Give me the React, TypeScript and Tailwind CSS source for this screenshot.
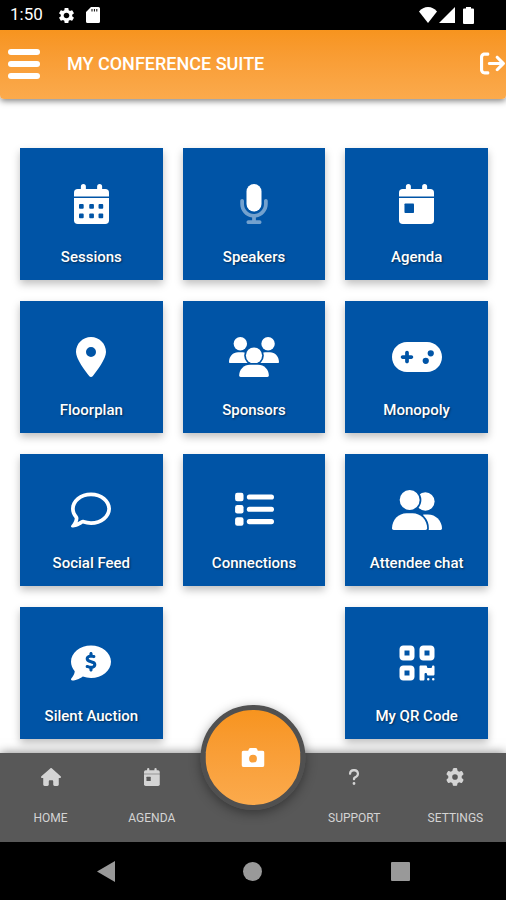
import type { ReactNode } from 'react'
import {
  FaArrowRightFromBracket,
  FaCommentDollar,
  FaGamepad,
  FaGear,
  FaHouse,
  FaLocationDot,
  FaQrcode,
  FaQuestion,
  FaRegComment,
} from 'react-icons/fa6'
import { MdSettings } from 'react-icons/md'

type IconProps = { className?: string }

function CalendarFrame({ className, children }: { className?: string; children: ReactNode }) {
  return (
    <svg viewBox="0 0 448 512" fill="currentColor" className={className} aria-hidden="true">
      <path d="M88 32a32 32 0 0 1 64 0v32h144V32a32 32 0 0 1 64 0v32h40a48 48 0 0 1 48 48v48H0v-48a48 48 0 0 1 48-48h40z" />
      <path d="M0 178h448v286a48 48 0 0 1-48 48H48a48 48 0 0 1-48-48z" />
      {children}
    </svg>
  )
}

function CalendarDots({ className }: IconProps) {
  return (
    <CalendarFrame className={className}>
      <g fill="#0054a6">
        {[64, 195, 314].map((x) => (
          <g key={x}>
            <rect x={x} y="256" width="60" height="60" rx="12" />
            <rect x={x} y="377" width="60" height="60" rx="12" />
          </g>
        ))}
      </g>
    </CalendarFrame>
  )
}

function CalendarDay({ className, hole = '#0054a6' }: IconProps & { hole?: string }) {
  return (
    <CalendarFrame className={className}>
      <rect x="70" y="250" width="122" height="122" rx="10" fill={hole} />
    </CalendarFrame>
  )
}

function Microphone({ className }: IconProps) {
  return (
    <svg viewBox="0 0 384 512" fill="currentColor" className={className} aria-hidden="true">
      <path
        opacity=".45"
        d="M40 192c13 0 24 11 24 24v40c0 71 57 128 128 128s128-57 128-128v-40c0-13 11-24 24-24s24 11 24 24v40c0 89-66 162-152 174v34h48c13 0 24 11 24 24s-11 24-24 24H120c-13 0-24-11-24-24s11-24 24-24h48v-34C82 418 16 345 16 256v-40c0-13 11-24 24-24z"
      />
      <rect x="96" width="192" height="352" rx="96" />
    </svg>
  )
}

function UsersThree({ className }: IconProps) {
  return (
    <svg viewBox="0 0 640 512" fill="currentColor" className={className} aria-hidden="true">
      <circle cx="145" cy="86" r="86" />
      <circle cx="500" cy="86" r="86" />
      <path d="M0 320c0-72 52-124 116-124h60c60 0 90 50 90 137H14c-8 0-14-6-14-13zM640 320c0-72-52-124-116-124h-60c-60 0-90 50-90 137h252c8 0 14-6 14-13z" />
      <g stroke="#0054a6" strokeWidth="44" paintOrder="stroke">
        <circle cx="320" cy="238" r="104" />
        <path d="M130 494c0-80 60-140 138-140h104c78 0 138 60 138 140 0 10-8 18-18 18H148c-10 0-18-8-18-18z" />
      </g>
    </svg>
  )
}

function UserPair({ className }: IconProps) {
  return (
    <svg viewBox="0 0 640 512" fill="currentColor" className={className} aria-hidden="true">
      <circle cx="427" cy="146" r="118" />
      <path d="M400 312h60c100 0 180 80 180 182 0 10-8 18-18 18H400z" />
      <g stroke="#0054a6" strokeWidth="44" paintOrder="stroke">
        <circle cx="226" cy="128" r="128" />
        <path d="M0 490c0-110 84-194 186-194h78c102 0 186 84 186 194 0 12-10 22-22 22H22c-12 0-22-10-22-22z" />
      </g>
    </svg>
  )
}

function ListIcon({ className }: IconProps) {
  return (
    <svg viewBox="0 0 512 512" fill="currentColor" className={className} aria-hidden="true">
      {[36, 192, 350].map((y) => (
        <g key={y}>
          <rect x="14" y={y} width="108" height="108" rx="28" />
          <rect x="164" y={y + 21} width="348" height="66" rx="33" />
        </g>
      ))}
    </svg>
  )
}

function CameraIcon({ className }: IconProps) {
  return (
    <svg viewBox="0 0 23 19" fill="currentColor" className={className} aria-hidden="true">
      <path
        fillRule="evenodd"
        d="M7.3 1.3A2 2 0 0 1 9.1 0h4.8a2 2 0 0 1 1.8 1.3l.6 1.5H21a2 2 0 0 1 2 2V17a2 2 0 0 1-2 2H2a2 2 0 0 1-2-2V4.8a2 2 0 0 1 2-2h4.7zM11.5 6.8a3.9 3.9 0 1 0 0 7.8 3.9 3.9 0 0 0 0-7.8z"
      />
    </svg>
  )
}

const tiles = [
  { label: 'Sessions', icon: <CalendarDots className="h-10 w-auto" /> },
  { label: 'Speakers', icon: <Microphone className="h-10 w-auto" /> },
  { label: 'Agenda', icon: <CalendarDay className="h-10 w-auto" /> },
  { label: 'Floorplan', icon: <FaLocationDot className="size-10" /> },
  { label: 'Sponsors', icon: <UsersThree className="h-10 w-auto" /> },
  { label: 'Monopoly', icon: <FaGamepad className="h-10 w-[50px]" /> },
  { label: 'Social Feed', icon: <FaRegComment className="size-10" /> },
  { label: 'Connections', icon: <ListIcon className="size-10" /> },
  { label: 'Attendee chat', icon: <UserPair className="h-10 w-auto" /> },
  { label: 'Silent Auction', icon: <FaCommentDollar className="size-10" /> },
  null,
  { label: 'My QR Code', icon: <FaQrcode className="size-10" /> },
]

function StatusBar() {
  return (
    <div className="flex h-[30px] items-center justify-between bg-black pr-8 pl-[10px] text-white">
      <div className="flex items-center">
        <span className="w-[47px] text-[17px]">1:50</span>
        <MdSettings className="mr-2.5 size-[19px]" />
        <svg viewBox="0 0 14 16" className="h-4 w-3.5" fill="currentColor" aria-hidden="true">
          <path
            fillRule="evenodd"
            d="M5 0h7.5A1.5 1.5 0 0 1 14 1.5v13a1.5 1.5 0 0 1-1.5 1.5h-11A1.5 1.5 0 0 1 0 14.5V5zM5.5 2v2.500h1V2zm2.400 0v2.500h1V2zm2.400 0v2.500h1V2z"
          />
        </svg>
      </div>
      <div className="flex items-center">
        <svg viewBox="0 0 18 16" className="h-4 w-[18px]" fill="currentColor" aria-hidden="true">
          <path d="M9 16 0 4.5C2.5 1.5 5.5 0 9 0s6.5 1.5 9 4.5z" />
        </svg>
        <svg viewBox="0 0 16 16" className="ml-0.5 size-4" fill="currentColor" aria-hidden="true">
          <path d="M16 0v16H0z" />
        </svg>
        <svg viewBox="0 0 11 17" className="ml-2 h-[17px] w-[11px]" fill="currentColor" aria-hidden="true">
          <path d="M3 0h5v1.500h2a1 1 0 0 1 1 1V16a1 1 0 0 1-1 1H1a1 1 0 0 1-1-1V2.500a1 1 0 0 1 1-1h2z" />
        </svg>
      </div>
    </div>
  )
}

function TabLink({ label, children }: { label: string; children: ReactNode }) {
  return (
    <a href="#" className="flex flex-col items-center pt-[15px] text-xs text-[#d4d4d4]">
      <span className="flex h-[18px] items-center">{children}</span>
      <span className="mt-6 leading-4">{label}</span>
    </a>
  )
}

export default function App() {
  return (
    <div className="flex min-h-screen flex-col bg-white font-[Roboto,sans-serif]">
      <StatusBar />

      {/* App header */}
      <header className="flex h-[69px] items-center rounded-b bg-linear-to-b from-[#f7941e] to-[#fbaa4c] pr-px pb-0.5 pl-2 text-white shadow-[0_2px_6px_rgba(0,0,0,0.5)]">
        <button type="button" aria-label="Menu" className="flex w-8 flex-col gap-1.5">
          <span className="h-1.5 rounded-full bg-white" />
          <span className="h-1.5 rounded-full bg-white" />
          <span className="h-1.5 rounded-full bg-white" />
        </button>
        <h1 className="ml-[27px] flex-1 text-lg font-medium">MY CONFERENCE SUITE</h1>
        <button type="button" aria-label="Log out">
          <FaArrowRightFromBracket className="size-[25px]" />
        </button>
      </header>

      <main className="grid flex-1 grid-cols-3 content-start gap-x-5 gap-y-[21px] pt-[49px] pr-[18px] pb-3.5 pl-5">
        {tiles.map((tile, i) =>
          tile ? (
            <button
              key={tile.label}
              type="button"
              className="flex h-[132px] flex-col items-center bg-[#0054a6] pt-9 text-white shadow-[0_4px_8px_rgba(0,0,0,0.25)]"
            >
              {tile.icon}
              <span className="mt-[23px] text-[15px] leading-5 font-medium [text-shadow:1px_1px_2px_rgba(0,0,0,0.5)]">
                {tile.label}
              </span>
            </button>
          ) : (
            <div key={i} />
          ),
        )}
      </main>

      {/* Tab bar */}
      <nav className="relative grid h-[89px] grid-cols-5 bg-[#585858] shadow-[0_0_10px_rgba(0,0,0,0.5)]">
        <TabLink label="HOME">
          <FaHouse className="h-[18px] w-5" />
        </TabLink>
        <TabLink label="AGENDA">
          <CalendarDay className="h-[18px] w-auto" hole="#585858" />
        </TabLink>
        <div />
        <TabLink label="SUPPORT">
          <FaQuestion className="size-[18px]" />
        </TabLink>
        <TabLink label="SETTINGS">
          <FaGear className="size-[18px]" />
        </TabLink>
        <button
          type="button"
          aria-label="Camera"
          className="absolute -top-12 left-1/2 flex size-[105px] -translate-x-1/2 items-center justify-center rounded-full border-[5px] border-[#505050] bg-linear-to-b from-[#f7941e] to-[#fbaa4c] text-white shadow-[0_3px_12px_rgba(0,0,0,0.4)]"
        >
          <CameraIcon className="h-[19px] w-[23px]" />
        </button>
      </nav>

      {/* Android system buttons */}
      <div className="grid h-[58px] grid-cols-3 place-items-center bg-black px-8 text-[#999999]">
        <button type="button" aria-label="Back">
          <svg viewBox="0 0 18 21" className="h-[21px] w-[18px]" fill="currentColor">
            <path d="M18 0v21L0 10.5z" />
          </svg>
        </button>
        <button type="button" aria-label="Home" className="size-[19px] rounded-full bg-[#999999]" />
        <button type="button" aria-label="Recent apps" className="size-[19px] rounded-[1px] bg-[#999999]" />
      </div>
    </div>
  )
}
